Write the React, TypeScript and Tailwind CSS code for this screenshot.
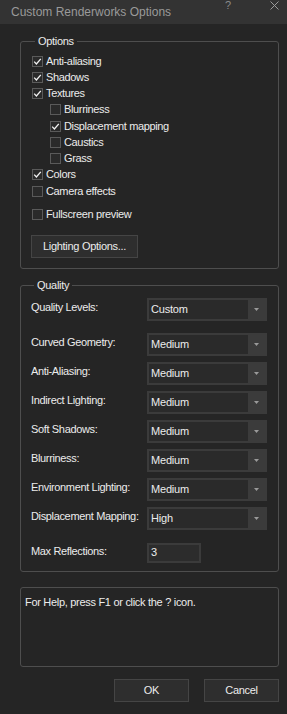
import { ReactNode } from "react";

const font = { fontFamily: '"Liberation Sans", Arial, sans-serif' };

function Check({ label, checked, indent }: { label: string; checked?: boolean; indent?: boolean }) {
    return (
        <div className={`h-[16.25px] flex items-center gap-[3px] ${indent ? "pl-[18px]" : ""}`}>
            <div className="w-[11px] h-[11px] border border-[#5a5a5a] bg-[#2a2a2a] flex items-center justify-center shrink-0">
                {checked && (
                    <svg width="9" height="9" viewBox="0 0 9 9">
                        <polyline points="1.2,4.6 3.4,7 7.8,1.8" fill="none" stroke="#f2f2f2" strokeWidth="1.3" />
                    </svg>
                )}
            </div>
            <span className="text-[11px] leading-[13px] text-[#ececec] tracking-[-0.35px]">{label}</span>
        </div>
    );
}

function Select({ value }: { value: string }) {
    return (
        <div className="w-[120px] h-[23px] bg-[#3b3b3b] p-[2px] flex">
            <div className="w-[99px] bg-[#2a2a2a] flex items-center pl-[2px] text-[11px] text-[#ececec] tracking-[-0.2px]">
                {value}
            </div>
            <div className="flex-1 flex items-center justify-center">
                <svg width="5" height="3" viewBox="0 0 5 3">
                    <polygon points="0,0 5,0 2.5,3" fill="#9a9a9a" />
                </svg>
            </div>
        </div>
    );
}

function Row({ label, children, className }: { label: string; children: ReactNode; className?: string }) {
    return (
        <div className={`flex items-center ${className || ""}`}>
            <span className="w-[116px] text-[11px] text-[#ececec] tracking-[-0.35px] -mt-[3px]">{label}</span>
            {children}
        </div>
    );
}

function Group({ title, children, className }: { title: string; children: ReactNode; className?: string }) {
    return (
        <fieldset className={`border border-[#4e4e4e] rounded-[3px] ${className || ""}`}>
            <legend className="ml-[3px] px-[3px] text-[11px] leading-[13px] text-[#ececec] tracking-[-0.3px]">{title}</legend>
            {children}
        </fieldset>
    );
}

function Btn({ label, className }: { label: string; className?: string }) {
    return (
        <button className={`h-[23px] bg-[#2e2e2e] border border-[#454545] text-[11px] text-[#ececec] tracking-[-0.3px] ${className || ""}`}>
            {label}
        </button>
    );
}

export default function App() {
    const levels: [string, string][] = [
        ["Curved Geometry:", "Medium"],
        ["Anti-Aliasing:", "Medium"],
        ["Indirect Lighting:", "Medium"],
        ["Soft Shadows:", "Medium"],
        ["Blurriness:", "Medium"],
        ["Environment Lighting:", "Medium"],
        ["Displacement Mapping:", "High"],
    ];

    return (
        <div className="w-[287px] h-[714px] bg-[#252525] flex flex-col overflow-hidden" style={font}>
            <div className="h-[24px] bg-[#333333] flex items-center pl-[11px] shrink-0 relative">
                <span className="text-[12px] text-[#9a9a9a]">Custom Renderworks Options</span>
                <span className="absolute left-[225px] top-0 text-[11px] leading-[10px] text-[#8a8a8a]">?</span>
                <svg className="absolute left-[270px] top-[1px]" width="9" height="9" viewBox="0 0 9 9">
                    <path d="M0.5 0.5 L8.5 8.5 M8.5 0.5 L0.5 8.5" stroke="#9a9a9a" strokeWidth="1" />
                </svg>
            </div>

            <div className="pl-[20px] pr-[8px] flex flex-col">
                <Group title="Options" className="mt-[11px] pl-[11px] pb-[10px] pt-[5px]">
                    <Check label="Anti-aliasing" checked />
                    <Check label="Shadows" checked />
                    <Check label="Textures" checked />
                    <Check label="Blurriness" indent />
                    <Check label="Displacement mapping" checked indent />
                    <Check label="Caustics" indent />
                    <Check label="Grass" indent />
                    <Check label="Colors" checked />
                    <Check label="Camera effects" />
                    <div className="mt-[7px]">
                        <Check label="Fullscreen preview" />
                    </div>
                    <Btn label="Lighting Options..." className="mt-[12px] -ml-px w-[107px]" />
                </Group>

                <Group title="Quality" className="mt-[10px] pl-[10px] pb-[8px] pt-[6px]">
                    <Row label="Quality Levels:">
                        <Select value="Custom" />
                    </Row>
                    <div className="mt-[12px] flex flex-col gap-[6px]">
                        {levels.map(([l, v]) => (
                            <Row key={l} label={l}>
                                <Select value={v} />
                            </Row>
                        ))}
                    </div>
                    <Row label="Max Reflections:" className="mt-[13px]">
                        <div className="w-[54px] h-[20px] border-2 border-[#3b3b3b] bg-[#2c2c2c] flex items-center pl-[2px] text-[11px] text-[#ececec]">
                            3
                        </div>
                    </Row>
                </Group>

                <div className="mt-[15px] h-[80px] border border-[#4e4e4e] rounded-[3px] px-[4px] pt-[6px] text-[11px] text-[#ececec] tracking-[-0.3px]">
                    For Help, press F1 or click the ? icon.
                </div>

                <div className="mt-[12px] flex justify-end gap-[15px]">
                    <Btn label="OK" className="w-[75px]" />
                    <Btn label="Cancel" className="w-[75px]" />
                </div>
            </div>
        </div>
    );
}
